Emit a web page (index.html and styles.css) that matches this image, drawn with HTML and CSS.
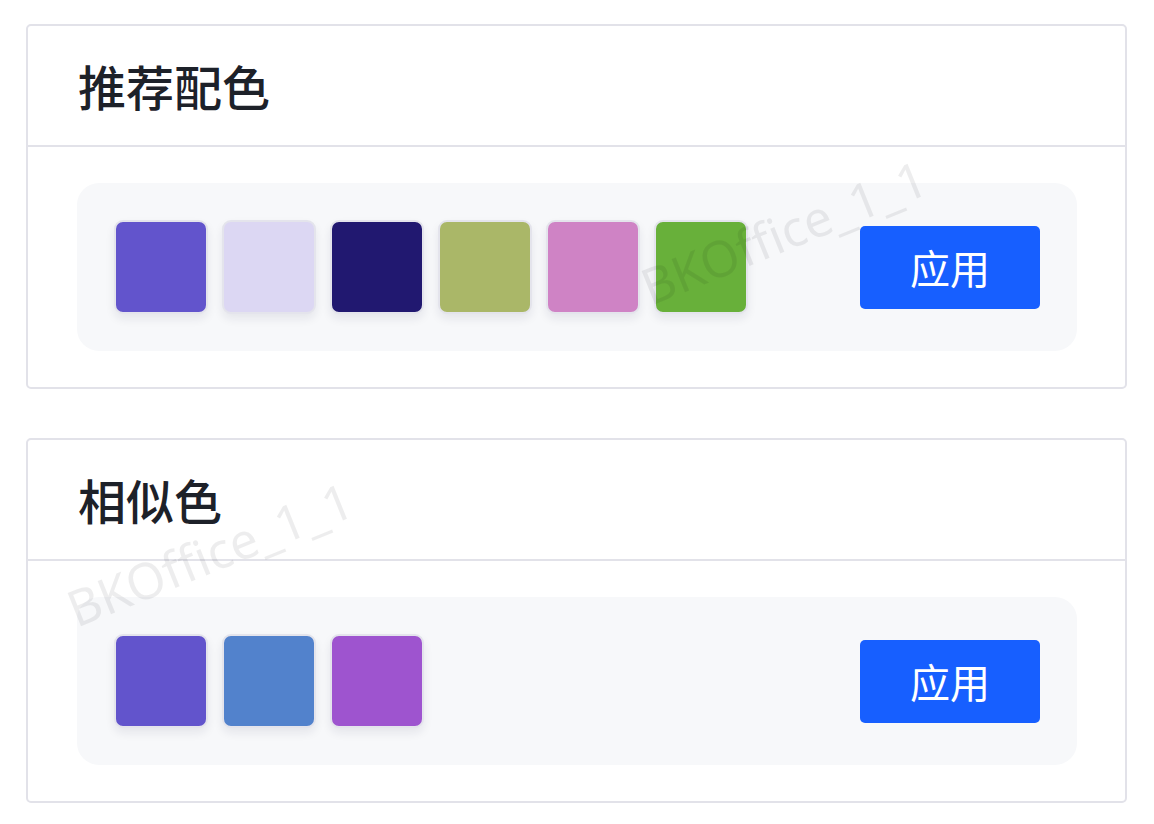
FILE: index.html
```html
<!DOCTYPE html>
<html lang="zh-CN">
<head>
    <meta charset="UTF-8">
    <meta name="viewport" content="width=device-width, initial-scale=1.0">
    <title>配色</title>
    <link rel="stylesheet" href="styles.css">
</head>
<body>

<div class="page">
    <div class="card">
        <div class="card-header">
            <h2>推荐配色</h2>
        </div>
        <div class="card-body">
            <div class="palette">
                <div class="swatches">
                    <div class="swatch" style="background-color:#6254cc;"></div>
                    <div class="swatch" style="background-color:#dcd7f3;"></div>
                    <div class="swatch" style="background-color:#211870;"></div>
                    <div class="swatch" style="background-color:#aab768;"></div>
                    <div class="swatch" style="background-color:#cf83c5;"></div>
                    <div class="swatch" style="background-color:#68b03a;"></div>
                </div>
                <button class="apply">应用</button>
            </div>
        </div>
    </div>

    <div class="card">
        <div class="card-header">
            <h2>相似色</h2>
        </div>
        <div class="card-body">
            <div class="palette">
                <div class="swatches">
                    <div class="swatch" style="background-color:#6254cc;"></div>
                    <div class="swatch" style="background-color:#5282cc;"></div>
                    <div class="swatch" style="background-color:#9e54cf;"></div>
                </div>
                <button class="apply">应用</button>
            </div>
        </div>
    </div>
</div>

<!-- marca d'agua -->
<div class="watermark wm1">BKOffice_1_1</div>
<div class="watermark wm2">BKOffice_1_1</div>

</body>
</html>
```

FILE: styles.css
```css
body {
    font-family: "Noto Sans CJK SC", "Noto Sans", sans-serif;
    margin: 0;
    padding: 0;
    background-color: #ffffff;
    color: #1d2129;
}
.page {
    padding: 24px 27px 0 26px;
    display: flex;
    flex-direction: column;
    gap: 49px;
}
.card {
    border: 2px solid #e2e2e9;
    border-radius: 5px;
    background-color: white;
}
.card-header {
    height: 119px;
    display: flex;
    align-items: center;
    padding: 0 50px;
    border-bottom: 2px solid #e2e2e9;
}
.card-header h2 {
    margin: 0;
    font-size: 48px;
    font-weight: 500;
    line-height: 1;
    margin-top: -2px;
}
.card-body {
    padding: 36px 48px 36px 49px;
}
.palette {
    background-color: #f7f8fa;
    border-radius: 22px;
    padding: 37px 37px 37px 37px;
    display: flex;
    align-items: center;
    justify-content: space-between;
}
.swatches {
    display: flex;
    gap: 14px;
}
.swatch {
    width: 94px;
    height: 94px;
    box-sizing: border-box;
    border: 2px solid #e4e4ec;
    border-radius: 9px;
    box-shadow: 0 5px 10px rgba(30, 30, 60, 0.08);
}
.apply {
    width: 180px;
    height: 83px;
    background-color: #175fff;
    color: white;
    border: none;
    border-radius: 5px;
    font-family: "Noto Sans CJK SC", sans-serif;
    font-size: 40px;
    cursor: pointer;
}
.apply:hover {
    background-color: #0f4fd9;
}
.watermark {
    position: absolute;
    font-family: "Noto Sans", "DejaVu Sans", sans-serif;
    font-size: 50px;
    color: rgba(0, 0, 20, 0.07);
    transform: rotate(-22deg);
    transform-origin: left bottom;
    white-space: nowrap;
    pointer-events: none;
}
.wm1 {
    left: 656px;
    top: 252px;
}
.wm2 {
    left: 82px;
    top: 574px;
}
```
